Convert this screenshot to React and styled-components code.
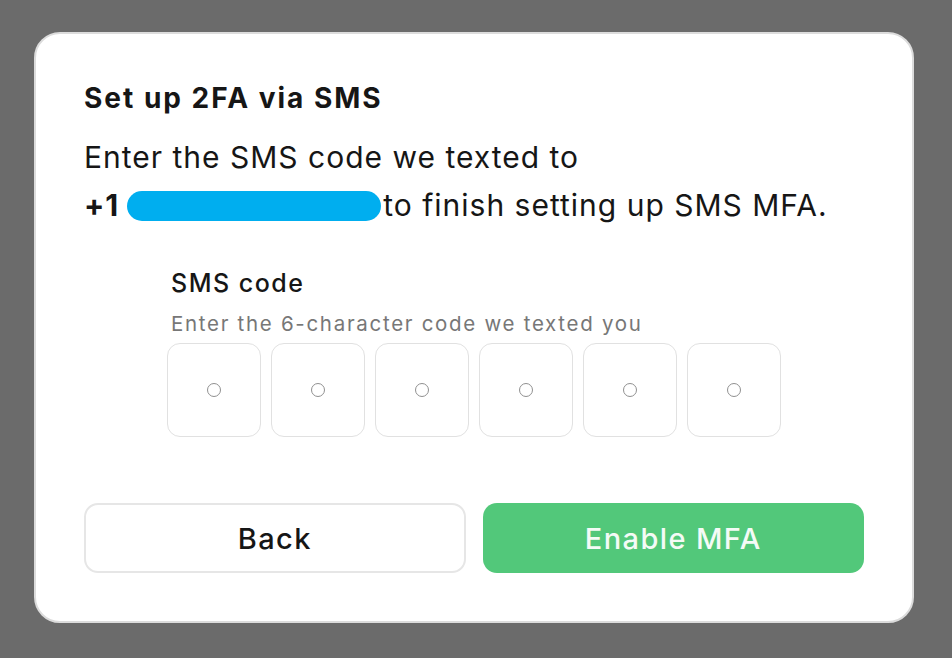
import React from "react";
import styled, { createGlobalStyle } from "styled-components";

const Global = createGlobalStyle`
  html, body { margin: 0; padding: 0; background: #6b6b6b; }
  body {
    font-family: Inter, "Noto Sans", "Liberation Sans", sans-serif;
    -webkit-font-smoothing: antialiased;
  }
  * { box-sizing: border-box; }
`;

const Page = styled.div`
  width: 952px;
  height: 658px;
  padding: 32px 0 0 34px;
`;

const Card = styled.div`
  width: 880px;
  height: 591px;
  background: #ffffff;
  border: 2px solid #dcdcdc;
  border-radius: 26px;
  padding: 48px 48px 0 48px;
  display: flex;
  flex-direction: column;
`;

const Title = styled.h1`
  margin: 0;
  font-size: 28px;
  line-height: 32px;
  font-weight: 650;
  letter-spacing: 2px;
  color: #161616;
`;

const Body = styled.p`
  margin: 19px 0 0 0;
  font-size: 30px;
  line-height: 48px;
  font-weight: 400;
  letter-spacing: 1px;
  color: #161616;
`;

const Strong = styled.strong`
  font-weight: 700;
`;

const Redaction = styled.span`
  display: inline-block;
  width: 254px;
  height: 30px;
  border-radius: 15px;
  background: #00aeef;
  vertical-align: -5px;
  margin: 0 2px 0 8px;
`;

const Field = styled.div`
  align-self: center;
  margin-top: 39px;
  display: flex;
  flex-direction: column;
`;

const Label = styled.div`
  font-size: 25px;
  line-height: 30px;
  font-weight: 500;
  letter-spacing: 1.5px;
  color: #161616;
  padding-left: 4px;
`;

const Hint = styled.div`
  margin-top: 13px;
  font-size: 20.5px;
  line-height: 26px;
  letter-spacing: 1.7px;
  color: #777777;
  padding-left: 4px;
`;

const Boxes = styled.div`
  margin-top: 6px;
  display: flex;
  gap: 10px;
`;

const Box = styled.div`
  width: 94px;
  height: 94px;
  border: 1.5px solid #e1e1e1;
  border-radius: 13px;
  display: flex;
  align-items: center;
  justify-content: center;
`;

const Dot = styled.span`
  width: 14px;
  height: 14px;
  border-radius: 50%;
  border: 1.5px solid #909090;
`;

const Actions = styled.div`
  margin-top: 66px;
  display: grid;
  grid-template-columns: 1fr 1fr;
  gap: 17px;
`;

const Button = styled.button`
  min-width: 0;
  padding: 0;
  height: 70px;
  border-radius: 14px;
  font-family: inherit;
  font-size: 29px;
  font-weight: 500;
  letter-spacing: 1.4px;
  cursor: pointer;
  border: ${(p) => (p.$primary ? "none" : "2px solid #e6e6e6")};
  background: ${(p) => (p.$primary ? "#52c87a" : "#ffffff")};
  color: ${(p) => (p.$primary ? "#f4fbf6" : "#161616")};
`;

export default function App() {
  return (
    <>
      <Global />
      <Page>
        <Card>
          <Title>Set up 2FA via SMS</Title>
          <Body>
            Enter the SMS code we texted to
            <br />
            <Strong>+1</Strong>
            <Redaction />
            to finish setting up SMS MFA.
          </Body>
          <Field>
            <Label>SMS code</Label>
            <Hint>Enter the 6-character code we texted you</Hint>
            <Boxes>
              {[0, 1, 2, 3, 4, 5].map((i) => (
                <Box key={i}>
                  <Dot />
                </Box>
              ))}
            </Boxes>
          </Field>
          <Actions>
            <Button>Back</Button>
            <Button $primary>Enable MFA</Button>
          </Actions>
        </Card>
      </Page>
    </>
  );
}
